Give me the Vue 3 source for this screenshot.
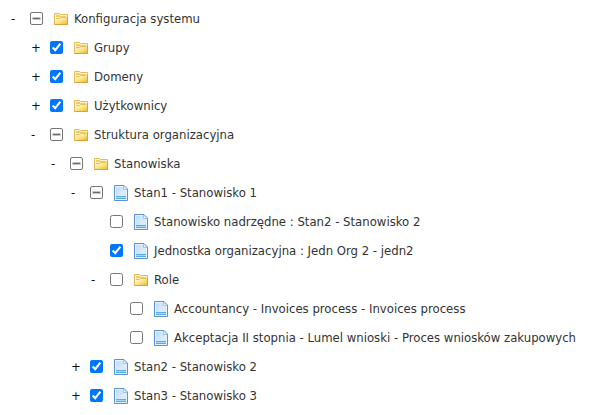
<template>
  <ul class="tree">
    <li
      v-for="node in visibleNodes"
      :key="node.id"
      class="tree-row"
      :style="{ paddingLeft: node.level * 20 + 'px' }"
    >
      <button
        v-if="node.expandable"
        type="button"
        class="toggle"
        :aria-expanded="node.open"
        :aria-labelledby="'label-' + node.id"
        @click="toggle(node)"
      >{{ node.open ? '-' : '+' }}</button>
      <span v-else class="toggle"></span>
      <input
        :id="'node-' + node.id"
        v-model="node.checked"
        type="checkbox"
        class="tree-checkbox"
        :class="{ partial: node.partial }"
        :indeterminate="node.partial"
        @change="node.partial = false"
      />
      <label :id="'label-' + node.id" :for="'node-' + node.id" class="tree-label">
        <svg v-if="node.type === 'folder'" class="tree-icon" viewBox="0 0 16 16" aria-hidden="true">
          <defs>
            <linearGradient :id="'folder-' + node.id" x1="0" y1="0" x2="1" y2="1">
              <stop offset="0" stop-color="#fffbe0" />
              <stop offset="0.5" stop-color="#fbe68e" />
              <stop offset="1" stop-color="#ecbd35" />
            </linearGradient>
          </defs>
          <path d="M1.5 13.5v-11h5l1 1h7v10z" fill="#fdf3c4" stroke="#e8b95a" />
          <path d="M3 4h4v1h6v1H3z" fill="#f0cd68" />
          <path d="M2 13V8h4.5l1-1.5H14V13z" :fill="'url(#folder-' + node.id + ')'" />
          <path d="M3 7.5h3.5l1-1h6" fill="none" stroke="#e9c057" />
          <path d="M1.5 13.5h13v-8" fill="none" stroke="#dba23c" />
        </svg>
        <svg v-else class="tree-icon" viewBox="0 0 16 16" aria-hidden="true">
          <defs>
            <linearGradient :id="'page-' + node.id" x1="0" y1="0" x2="1" y2="1">
              <stop offset="0" stop-color="#b9d8f8" />
              <stop offset="0.6" stop-color="#dcecfc" />
              <stop offset="1" stop-color="#c4e2fb" />
            </linearGradient>
          </defs>
          <path d="M1.5 0.5h9.5l3.5 3.5v11.5h-13z" :fill="'url(#page-' + node.id + ')'" stroke="#5a92d6" />
          <path d="M2.5 14.5v-13h8l3 3v10z" fill="none" stroke="#e6f2fe" />
          <path d="M10.5 1v3.5h3.5z" fill="#fff" stroke="#9cc5ee" />
          <path d="M3 11.5h10v2h-10z" fill="#a4dafb" />
          <path d="M3 11.5h10M3 13.5h10" fill="none" stroke="#5cabe9" />
        </svg>
        <span>{{ node.name }}</span>
      </label>
    </li>
  </ul>
</template>

<script setup>
import { computed, reactive } from 'vue';

const nodes = reactive([
  { id: 1, level: 0, type: 'folder', name: 'Konfiguracja systemu', expandable: true, open: true, partial: true },
  { id: 2, level: 1, type: 'folder', name: 'Grupy', expandable: true, checked: true },
  { id: 3, level: 1, type: 'folder', name: 'Domeny', expandable: true, checked: true },
  { id: 4, level: 1, type: 'folder', name: 'Użytkownicy', expandable: true, checked: true },
  { id: 5, level: 1, type: 'folder', name: 'Struktura organizacyjna', expandable: true, open: true, partial: true },
  { id: 6, level: 2, type: 'folder', name: 'Stanowiska', expandable: true, open: true, partial: true },
  { id: 7, level: 3, type: 'page', name: 'Stan1 - Stanowisko 1', expandable: true, open: true, partial: true },
  { id: 8, level: 4, type: 'page', name: 'Stanowisko nadrzędne : Stan2 - Stanowisko 2' },
  { id: 9, level: 4, type: 'page', name: 'Jednostka organizacyjna : Jedn Org 2 - jedn2', checked: true },
  { id: 10, level: 4, type: 'folder', name: 'Role', expandable: true, open: true },
  { id: 11, level: 5, type: 'page', name: 'Accountancy - Invoices process - Invoices process' },
  { id: 12, level: 5, type: 'page', name: 'Akceptacja II stopnia - Lumel wnioski - Proces wniosków zakupowych' },
  { id: 13, level: 3, type: 'page', name: 'Stan2 - Stanowisko 2', expandable: true, checked: true },
  { id: 14, level: 3, type: 'page', name: 'Stan3 - Stanowisko 3', expandable: true, checked: true }
].map((node) => ({ open: false, checked: false, partial: false, expandable: false, ...node })));

// Skip everything deeper than the nearest collapsed node
const visibleNodes = computed(() => {
  let limit = Infinity;
  return nodes.filter((node) => {
    if (node.level > limit) return false;
    limit = node.expandable && !node.open ? node.level : Infinity;
    return true;
  });
});

const toggle = (node) => {
  node.open = !node.open;
};
</script>

<style>
body {
  margin: 0;
  background-color: #fff;
}
</style>

<style scoped>
.tree {
  list-style: none;
  margin: 0;
  padding: 4px 10px;
  font-family: Tahoma, "DejaVu Sans Condensed", "Noto Sans", sans-serif;
  font-size: 13px;
  line-height: 29px;
  color: #333;
}

.tree-row {
  display: flex;
  align-items: center;
  height: 29px;
  white-space: nowrap;
}

.toggle {
  flex: none;
  box-sizing: border-box;
  width: 20px;
  padding: 0 0 0 1px;
  border: 0;
  background: none;
  font: inherit;
  color: #111;
  text-align: left;
  cursor: pointer;
}

.tree-checkbox {
  flex: none;
  width: 13px;
  height: 13px;
  margin: 0;
}

.tree-checkbox.partial {
  appearance: none;
  display: grid;
  place-items: center;
  border: 1px solid #767676;
  border-radius: 2px;
  background-color: #fff;
}

.tree-checkbox.partial::before {
  content: "";
  width: 7px;
  height: 1px;
  border-radius: 1px;
  background-color: #6a6a6a;
  box-shadow: 0 0 0 1px #c4c4c4;
}

.tree-label {
  display: flex;
  align-items: center;
  gap: 5px;
  padding-left: 10px;
}

.tree-icon {
  flex: none;
  width: 16px;
  height: 16px;
}
</style>
